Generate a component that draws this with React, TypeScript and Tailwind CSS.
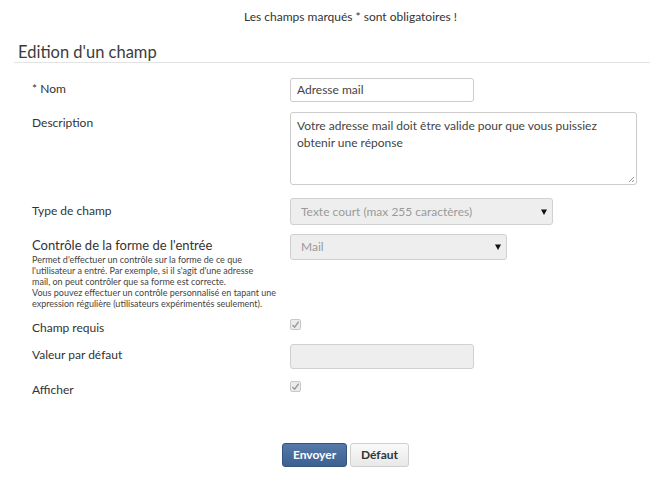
import React from "react";

const font = { fontFamily: "Lato, 'Open Sans', sans-serif" };

function Check() {
  return (
    <div className="w-[11px] h-[11px] rounded-[2px] border border-[#c8c8c8] bg-[#ececec] flex items-center justify-center">
      <svg width="9" height="9" viewBox="0 0 10 10">
        <path d="M1.5 5.5 L4 8 L8.5 2" fill="none" stroke="#9a9a9a" strokeWidth="1.6" />
      </svg>
    </div>
  );
}

function Arrow() {
  return (
    <svg width="6" height="6" viewBox="0 0 6 6">
      <path d="M0 0.5 H6 L3 6 Z" fill="#111" />
    </svg>
  );
}

export default function App() {
  return (
    <div className="w-[650px] h-[482px] bg-white text-[#333] text-[12px] relative overflow-hidden" style={font}>
      <div className="h-[35px] pt-[8px] pl-[51px] text-center">Les champs marqués * sont obligatoires !</div>
      <div className="ml-[14px] border-b border-[#e3e3e3] h-[28px] pl-[4px] pt-[7px] text-[16.5px] leading-[20px] text-[#3c3c3c]">
        Edition d'un champ
      </div>

      <div className="pl-[32px] pt-[15px]">
        {/* Nom */}
        <div className="flex items-start h-[24px]">
          <div className="w-[258px] pt-[2px]">* Nom</div>
          <div className="w-[184px] h-[24px] border border-[#ccc] rounded-[3px] px-[6px] flex items-center text-[#444]">Adresse mail</div>
        </div>
        {/* Description */}
        <div className="flex items-start mt-[10px]">
          <div className="w-[258px] pt-[2px]">Description</div>
          <div className="w-[347px] h-[73px] border border-[#ccc] rounded-[3px] px-[6px] pt-[4px] leading-[17px] text-[#444] relative">
            Votre adresse mail doit être valide pour que vous puissiez obtenir une réponse
            <svg className="absolute right-[1px] bottom-[1px]" width="7" height="7" viewBox="0 0 7 7">
              <path d="M6 1 L1 6 M6 4 L4 6" stroke="#888" strokeWidth="0.9" />
            </svg>
          </div>
        </div>
        {/* Type de champ */}
        <div className="flex items-start mt-[13px]">
          <div className="w-[258px] pt-[4px]">Type de champ</div>
          <div className="w-[263px] h-[27px] border border-[#d0d0d0] rounded-[3px] bg-[#eee] pl-[10px] pr-[5px] flex items-center justify-between text-[#9a9a9a]">
            <span>Texte court (max 255 caractères)</span>
            <Arrow />
          </div>
        </div>
        {/* Controle */}
        <div className="flex items-start mt-[9px]">
          <div className="w-[258px]">
            <div className="text-[13px] leading-[18px] pt-[2px]">Contrôle de la forme de l'entrée</div>
            <div className="text-[9px] leading-[11px] text-[#444] whitespace-nowrap">
              Permet d'effectuer un contrôle sur la forme de ce que
              <br />
              l'utilisateur a entré. Par exemple, si il s'agit d'une adresse
              <br />
              mail, on peut contrôler que sa forme est correcte.
              <br />
              Vous pouvez effectuer un contrôle personnalisé en tapant une
              <br />
              expression régulière (utilisateurs expérimentés seulement).
            </div>
          </div>
          <div className="w-[217px] h-[26px] border border-[#d0d0d0] rounded-[3px] bg-[#eee] pl-[10px] pr-[5px] flex items-center justify-between text-[#9a9a9a]">
            <span>Mail</span>
            <Arrow />
          </div>
        </div>
        {/* Champ requis */}
        <div className="flex items-start mt-[10px] h-[16px]">
          <div className="w-[258px]">Champ requis</div>
          <div><Check /></div>
        </div>
        {/* Valeur */}
        <div className="flex items-start mt-[9px]">
          <div className="w-[258px] pt-[2px]">Valeur par défaut</div>
          <div className="w-[184px] h-[25px] border border-[#d0d0d0] rounded-[3px] bg-[#eee]" />
        </div>
        {/* Afficher */}
        <div className="flex items-start mt-[12px] h-[16px]">
          <div className="w-[258px]">Afficher</div>
          <div><Check /></div>
        </div>
      </div>

      <div className="flex gap-[3px] pl-[282px] mt-[46px]">
        <button className="w-[65px] h-[24px] rounded-[3px] border border-[#32557f] bg-gradient-to-b from-[#5579a8] to-[#3c6090] text-white font-bold text-[12px]" style={font}>
          Envoyer
        </button>
        <button className="w-[59px] h-[24px] rounded-[3px] border border-[#cfcfcf] bg-gradient-to-b from-[#fafafa] to-[#e8e8e8] text-[#333] font-bold text-[12px]" style={font}>
          Défaut
        </button>
      </div>
    </div>
  );
}
